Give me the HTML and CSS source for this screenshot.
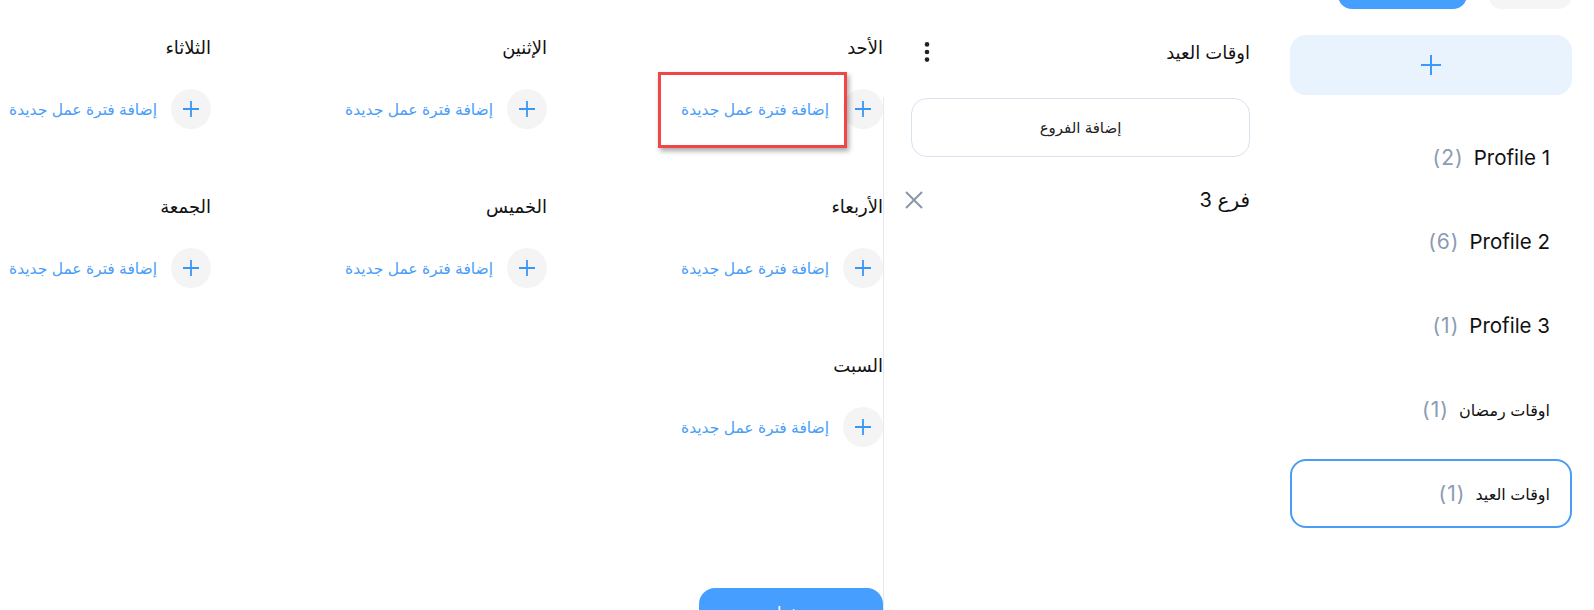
FILE: index.html
```html
<!DOCTYPE html>
<html lang="ar" dir="rtl">
<head>
  <meta charset="UTF-8">
  <meta name="viewport" content="width=device-width, initial-scale=1">
  <title>أوقات العمل</title>
  <link rel="stylesheet" href="styles.css">
</head>
<body>

  <div class="page">

    <aside class="sidebar">
      <div class="side-actions">
        <button class="btn-light"></button>
        <button class="btn-primary"></button>
      </div>

      <button class="add-profile" aria-label="إضافة">
        <svg width="22" height="22" viewBox="0 0 22 22"><path d="M11 1v20M1 11h20" stroke="#3d98fb" stroke-width="2" fill="none"/></svg>
      </button>

      <ul class="profile-list">
        <li class="profile"><span class="name latin">Profile 1</span><span class="count">(2)</span></li>
        <li class="profile"><span class="name latin">Profile 2</span><span class="count">(6)</span></li>
        <li class="profile"><span class="name latin">Profile 3</span><span class="count">(1)</span></li>
        <li class="profile"><span class="name">اوقات رمضان</span><span class="count">(1)</span></li>
        <li class="profile active"><span class="name">اوقات العيد</span><span class="count">(1)</span></li>
      </ul>
    </aside>

    <section class="branches">
      <div class="branches-head">
        <h2>اوقات العيد</h2>
        <button class="kebab" aria-label="المزيد">
          <svg width="24" height="24" viewBox="0 0 24 24"><circle cx="12" cy="4.4" r="2.3"/><circle cx="12" cy="12" r="2.3"/><circle cx="12" cy="19.6" r="2.3"/></svg>
        </button>
      </div>
      <div class="branches-body">
        <button class="add-branch">إضافة الفروع</button>
        <div class="branch">
          <span>فرع 3</span>
          <button class="remove" aria-label="حذف">
            <svg width="20" height="20" viewBox="0 0 20 20"><path d="M2 2l16 16M18 2L2 18" stroke="#8a97a8" stroke-width="2" fill="none"/></svg>
          </button>
        </div>
      </div>
    </section>

    <section class="schedule">
      <div class="days">
        <div class="day">
          <h3>الأحد</h3>
          <button class="add-shift"><span class="plus"><svg width="18" height="18" viewBox="0 0 18 18"><path d="M9 1v16M1 9h16"/></svg></span>إضافة فترة عمل جديدة</button>
        </div>
        <div class="day">
          <h3>الإثنين</h3>
          <button class="add-shift"><span class="plus"><svg width="18" height="18" viewBox="0 0 18 18"><path d="M9 1v16M1 9h16"/></svg></span>إضافة فترة عمل جديدة</button>
        </div>
        <div class="day">
          <h3>الثلاثاء</h3>
          <button class="add-shift"><span class="plus"><svg width="18" height="18" viewBox="0 0 18 18"><path d="M9 1v16M1 9h16"/></svg></span>إضافة فترة عمل جديدة</button>
        </div>
        <div class="day">
          <h3>الأربعاء</h3>
          <button class="add-shift"><span class="plus"><svg width="18" height="18" viewBox="0 0 18 18"><path d="M9 1v16M1 9h16"/></svg></span>إضافة فترة عمل جديدة</button>
        </div>
        <div class="day">
          <h3>الخميس</h3>
          <button class="add-shift"><span class="plus"><svg width="18" height="18" viewBox="0 0 18 18"><path d="M9 1v16M1 9h16"/></svg></span>إضافة فترة عمل جديدة</button>
        </div>
        <div class="day">
          <h3>الجمعة</h3>
          <button class="add-shift"><span class="plus"><svg width="18" height="18" viewBox="0 0 18 18"><path d="M9 1v16M1 9h16"/></svg></span>إضافة فترة عمل جديدة</button>
        </div>
        <div class="day">
          <h3>السبت</h3>
          <button class="add-shift"><span class="plus"><svg width="18" height="18" viewBox="0 0 18 18"><path d="M9 1v16M1 9h16"/></svg></span>إضافة فترة عمل جديدة</button>
        </div>
      </div>

      <button class="save">حفظ</button>

      <div class="highlight"></div>
    </section>

  </div>

</body>
</html>
```

FILE: styles.css
```css
body {
  margin: 0;
  background-color: #fff;
  font-family: 'Inter', 'DejaVu Sans', sans-serif;
  color: #111;
  overflow: hidden;
}

button {
  font-family: inherit;
  border: none;
  background: none;
  padding: 0;
  cursor: pointer;
}

.page {
  display: flex;
  min-height: 100vh;
  padding-right: 22px;
}

/* sidebar */

.sidebar {
  width: 282px;
  flex-shrink: 0;
  margin-left: 40px;
}

.side-actions {
  display: flex;
  gap: 21px;
  margin-top: -31px;
}

.side-actions button {
  height: 40px;
  border-radius: 14px;
}

.btn-light {
  width: 84px;
  background-color: #f5f5f5;
}

.btn-primary {
  width: 129px;
  background-color: #449ffe;
}

.add-profile {
  display: flex;
  align-items: center;
  justify-content: center;
  width: 100%;
  height: 60px;
  margin-top: 26px;
  margin-bottom: 28px;
  background-color: #e8f3fe;
  border-radius: 16px;
}

.profile-list {
  list-style: none;
  margin: 0;
  padding: 0;
  display: flex;
  flex-direction: column;
  gap: 15px;
}

.profile {
  display: flex;
  align-items: center;
  gap: 10px;
  height: 69px;
  box-sizing: border-box;
  padding: 0 20px;
  border: 2px solid transparent;
  border-radius: 16px;
  font-size: 16px;
}

.profile.active {
  border-color: #4a9df3;
}

.profile .latin {
  font-size: 20.5px;
}

.count {
  font-size: 21px;
  letter-spacing: 1px;
  color: #8b9bb2;
}

/* branches */

.branches {
  width: 367px;
  flex-shrink: 0;
  display: flex;
  flex-direction: column;
}

.branches-head {
  display: flex;
  align-items: center;
  justify-content: space-between;
  height: 36px;
  padding-top: 34px;
  padding-left: 32px;
  margin-bottom: 27px;
}

.branches-head h2 {
  margin: 0;
  font-size: 18px;
  font-weight: normal;
}

.kebab {
  display: flex;
  fill: #222;
}

.branches-body {
  flex: 1;
  border-left: 1px solid #e3e9f0;
  padding-top: 1px;
  padding-left: 27px;
}

.add-branch {
  display: block;
  width: 100%;
  height: 59px;
  border: 1px solid #d9e3ee;
  border-radius: 16px;
  font-size: 15px;
  color: #222;
}

.branch {
  display: flex;
  align-items: center;
  justify-content: space-between;
  height: 28px;
  margin-top: 29px;
  margin-left: -7px;
  font-size: 20px;
}

.remove {
  display: flex;
}

/* schedule */

.schedule {
  flex: 1;
  position: relative;
  padding-top: 36px;
}

.days {
  display: grid;
  grid-template-columns: repeat(3, 203px);
  column-gap: 133px;
  row-gap: 66px;
}

.day h3 {
  margin: 0 0 29px;
  height: 24px;
  line-height: 24px;
  font-size: 18px;
  font-weight: normal;
}

.add-shift {
  display: flex;
  align-items: center;
  gap: 14px;
  color: #4a9ef8;
  font-size: 15.5px;
  white-space: nowrap;
}

.plus {
  display: flex;
  align-items: center;
  justify-content: center;
  width: 40px;
  height: 40px;
  border-radius: 50%;
  background-color: #f4f4f5;
  flex-shrink: 0;
}

.plus svg {
  stroke: #3b95f7;
  stroke-width: 1.8;
  fill: none;
}

.save {
  display: block;
  width: 184px;
  height: 48px;
  margin-top: 141px;
  background-color: #469ffe;
  border-radius: 16px;
  color: #fff;
  font-size: 16px;
}

.highlight {
  position: absolute;
  left: 658px;
  top: 72px;
  width: 189px;
  height: 76px;
  box-sizing: border-box;
  border: 3px solid #f24545;
  box-shadow: 2px 3px 5px rgba(0, 0, 0, 0.35);
}
```
